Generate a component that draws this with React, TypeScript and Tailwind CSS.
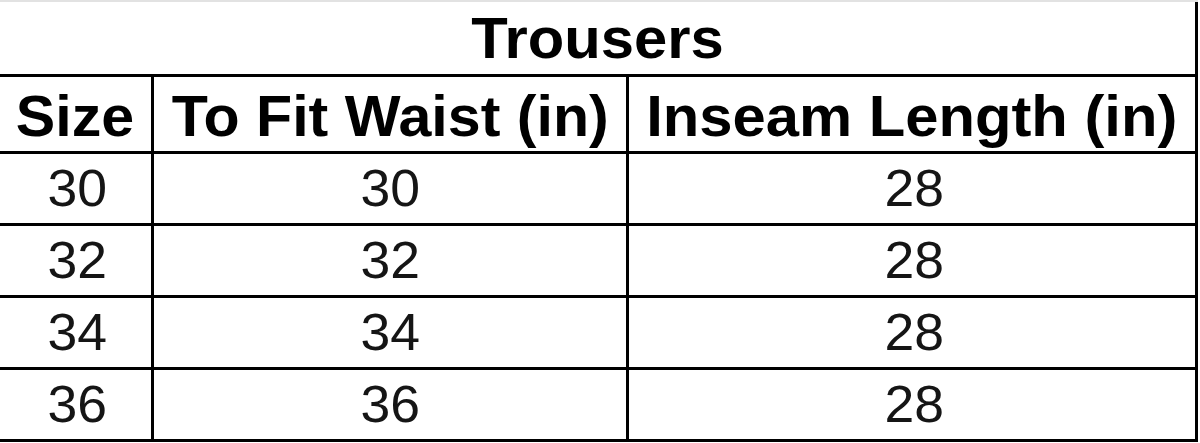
const rows = [
  { size: '30', waist: '30', inseam: '28' },
  { size: '32', waist: '32', inseam: '28' },
  { size: '34', waist: '34', inseam: '28' },
  { size: '36', waist: '36', inseam: '28' },
];

export default function App() {
  return (
    <div className="w-[1200px] h-[443px] bg-white overflow-hidden font-['Liberation_Sans',Arial,sans-serif] text-black">
      <div className="w-[1198px] border-t-2 border-[#e2e2e2]">
        {/* Title */}
        <div className="h-[75px] flex items-center justify-center border-r-[3px] border-b-[3px] border-black">
          <span className="inline-block text-[58px] font-bold leading-none scale-x-[1.03]">Trousers</span>
        </div>

        {/* Header */}
        <div className="grid grid-cols-[154px_475px_1fr] h-[77px] border-b-[3px] border-r-[3px] border-black">
          <div className="flex items-center justify-center pt-[3px] border-r-[3px] border-black">
            <span className="inline-block text-[58px] font-bold leading-none scale-x-[1.02]">Size</span>
          </div>
          <div className="flex items-center justify-center pt-[3px] border-r-[3px] border-black">
            <span className="inline-block text-[58px] font-bold leading-none whitespace-nowrap scale-x-[1.02]">To Fit Waist (in)</span>
          </div>
          <div className="flex items-center justify-center pt-[3px]">
            <span className="inline-block text-[58px] font-bold leading-none whitespace-nowrap scale-x-[1.03]">Inseam Length (in)</span>
          </div>
        </div>

        {/* Data rows */}
        {rows.map((r) => (
          <div
            key={r.size}
            className="grid grid-cols-[154px_475px_1fr] h-[72px] border-b-[3px] border-r-[3px] border-black text-[#151515]"
          >
            <div className="flex items-center justify-center pl-[4px] border-r-[3px] border-black">
              <span className="inline-block text-[51px] leading-none scale-x-[1.05]">{r.size}</span>
            </div>
            <div className="flex items-center justify-center border-r-[3px] border-black">
              <span className="inline-block text-[51px] leading-none scale-x-[1.05]">{r.waist}</span>
            </div>
            <div className="flex items-center justify-center pl-[4px]">
              <span className="inline-block text-[51px] leading-none scale-x-[1.05]">{r.inseam}</span>
            </div>
          </div>
        ))}
      </div>
    </div>
  );
}
